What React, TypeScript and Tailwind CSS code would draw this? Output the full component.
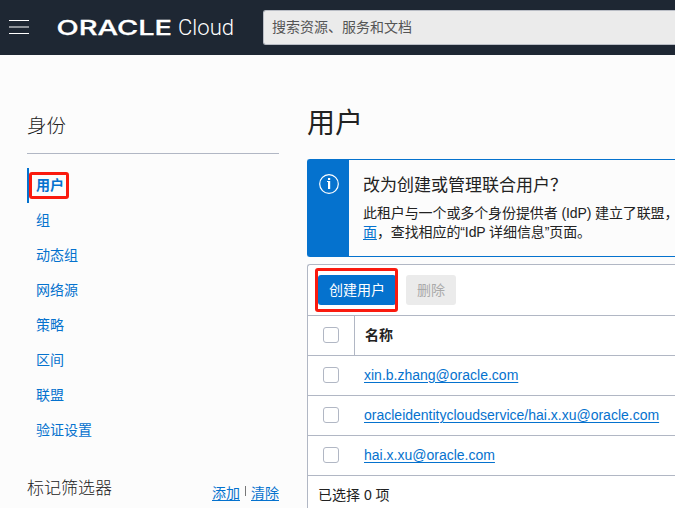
import React from "react";

const navItems = ["组", "动态组", "网络源", "策略", "区间", "联盟", "验证设置"];

const users = [
  "xin.b.zhang@oracle.com",
  "oracleidentitycloudservice/hai.x.xu@oracle.com",
  "hai.x.xu@oracle.com",
];

function Checkbox() {
  return <span className="-mt-px block h-4 w-4 shrink-0 rounded-[3px] border border-[#b1b7c4] bg-white" />;
}

function Header() {
  return (
    <header className="flex h-[55px] w-[675px] items-start overflow-hidden bg-[#1e2733]">
      <button aria-label="menu" className="ml-[9px] mt-5 flex h-[14px] w-5 shrink-0 flex-col justify-between">
        <span className="h-px w-full bg-white" />
        <span className="h-[2px] w-full bg-[#8e9399]" />
        <span className="h-px w-full bg-white" />
      </button>
      <svg className="ml-7 mt-[10px] shrink-0" width="206" height="35" viewBox="57 10 206 35" fill="#fff">
        <text
          x="56.5"
          y="35"
          textLength="115.5"
          lengthAdjust="spacingAndGlyphs"
          fontFamily="Inter, sans-serif"
          fontWeight="500"
          fontSize="20.6"
          stroke="#fff"
          strokeWidth="0.3"
        >
          ORACLE
        </text>
        <text
          x="178"
          y="35"
          textLength="56"
          lengthAdjust="spacingAndGlyphs"
          fontFamily="Roboto, sans-serif"
          fontWeight="300"
          fontSize="22"
        >
          Cloud
        </text>
      </svg>
      <div className="mt-[10px] flex h-[35px] w-[412px] shrink-0 items-center border border-r-0 rounded-l-[3px] border-[#b9bdc5] bg-[#ebebeb] pl-2 text-[14px] text-[#555]">
        搜索资源、服务和文档
      </div>
    </header>
  );
}

function Sidebar() {
  return (
    <aside className="ml-[27px] w-[252px] shrink-0 pt-[56px]">
      <h2 className="h-[43px] border-b border-[#b1b7c4] text-[19.5px] leading-[30px] font-light text-[#222]">身份</h2>
      <nav className="mt-[14px] text-[14px] leading-[35px] text-[#0572ce]">
        <a className="relative block border-l-2 border-[#0572ce] pl-[7px] font-bold">
          用户
          <span className="absolute top-[4px] left-0 h-[27px] w-10 rounded-[3px] border-[3px] border-[#fa1a0e]" />
        </a>
        {navItems.map((n) => (
          <a key={n} className="block pl-[9px]">
            {n}
          </a>
        ))}
      </nav>
      <div className="mt-[26px] flex justify-between">
        <h3 className="text-[17px] leading-[30px] font-light text-[#222]">标记筛选器</h3>
        <div className="flex pt-[4px] text-[14px] leading-[30px] text-[#0572ce]">
          <a className="underline underline-offset-2">添加</a>
          <span className="mx-[5px] mt-2 h-[10px] w-px bg-[#777]" />
          <a className="underline underline-offset-2">清除</a>
        </div>
      </div>
    </aside>
  );
}

function Banner() {
  return (
    <section className="mt-[15px] flex h-[98px] rounded-l-[3px] border border-r-0 border-[#0572ce] bg-[#fcfcfc]">
      <div className="flex w-[41px] shrink-0 justify-center bg-[#0572ce] pt-[14px]">
        <svg width="20" height="20" viewBox="0 0 20 20" fill="none">
          <circle cx="10" cy="10" r="9.3" stroke="#fff" strokeWidth="1.2" />
          <path d="M9 4h2.2v2H9zM8 7h3.2v8H9V8H8z" fill="#fff" />
        </svg>
      </div>
      <div className="pl-[14px] text-[#222]">
        <h4 className="pt-[14px] text-[17px] leading-6 whitespace-nowrap">改为创建或管理联合用户？</h4>
        <p className="pt-[6px] text-[14px] leading-[19px] tracking-[-0.1px] whitespace-nowrap">
          此租户与一个或多个身份提供者 (IdP) 建立了联盟
          <span className="inline-block w-[8px] overflow-hidden align-bottom">，</span>
          <br />
          <a className="text-[#0572ce] underline underline-offset-2">面</a>，查找相应的“IdP 详细信息”页面。
        </p>
      </div>
    </section>
  );
}

function UserTable() {
  return (
    <section className="mt-[7px] h-[260px] rounded-tl-[3px] border-t border-l border-[#b1b7c4] bg-white text-[14px]">
      <div className="flex h-[51px] gap-[10px] border-b border-[#b1b7c4] pt-[10px] pl-[10px]">
        <button className="relative h-[30px] w-[78px] rounded-[3px] bg-[#0572ce] text-white">
          创建用户
          <span className="absolute -top-[7px] -left-[3px] h-[44px] w-[83px] rounded-[3px] border-[3px] border-[#fa1a0e]" />
        </button>
        <button className="h-[30px] w-[50px] rounded-[3px] bg-[#ebebeb] text-[#aaa]">删除</button>
      </div>
      <div className="flex h-10 border-b border-[#b1b7c4]">
        <div className="flex w-[47px] items-center border-r border-[#b1b7c4] pl-[15px]">
          <Checkbox />
        </div>
        <div className="pl-[10px] leading-[39px] font-bold text-[#222]">名称</div>
      </div>
      {users.map((u) => (
        <div key={u} className="flex h-10 items-center border-b border-[#b1b7c4] pl-[15px]">
          <Checkbox />
          <a className="ml-[25px] leading-[39px] text-[#0572ce] underline underline-offset-2">{u}</a>
        </div>
      ))}
      <div className="pl-[10px] leading-[38px] text-[#222]">已选择 0 项</div>
    </section>
  );
}

export default function App() {
  return (
    <div className="h-[508px] w-[675px] overflow-hidden bg-[#fcfcfc] font-['Liberation_Sans','Noto_Sans_CJK_SC',sans-serif]">
      <Header />
      <div className="flex h-[453px] overflow-hidden">
        <Sidebar />
        <main className="ml-7 w-[368px] shrink-0 pt-[49px]">
          <h1 className="h-10 text-[28px] leading-10 font-normal text-[#222]">用户</h1>
          <Banner />
          <UserTable />
        </main>
      </div>
    </div>
  );
}
